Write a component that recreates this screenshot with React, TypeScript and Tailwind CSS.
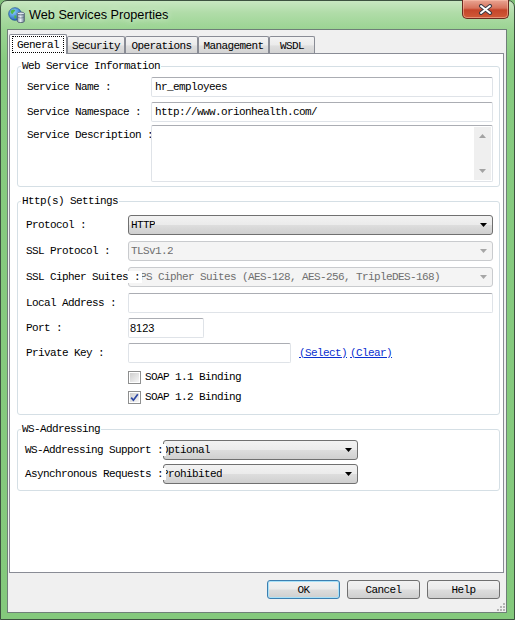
import React from "react";

const btnBg =
  "bg-[linear-gradient(180deg,#f2f2f2_0%,#ebebeb_48%,#dddddd_52%,#cfcfcf_100%)]";

function Arrow({ color }: { color: string }) {
  return (
    <svg width="7" height="4" viewBox="0 0 7 4" className="shrink-0">
      <path d="M0 0H7L3.5 4Z" fill={color} />
    </svg>
  );
}

const Label = ({ w, text, cover = "" }: { w: string; text: string; cover?: string }) => (
  <div className={`${w} shrink-0 relative z-10 whitespace-nowrap`}>
    <span className={cover}>{text}</span>
  </div>
);

const TextBox = ({ w, value = "", font = "" }: { w: string; value?: string; font?: string }) => (
  <div
    className={`${w} h-[20px] rounded-[2px] border border-[#dfe3e8] border-t-[#abadb3] bg-white flex items-center overflow-hidden whitespace-nowrap ${font}`}
  >
    {value}
  </div>
);

function Combo({
  value,
  w,
  disabled = false,
  textClass = "pl-[2px]",
}: {
  value: string;
  w: string;
  disabled?: boolean;
  textClass?: string;
}) {
  return (
    <div
      className={`${w} h-[20px] flex items-center justify-between rounded-[3px] border pr-[5px] overflow-hidden whitespace-nowrap ${
        disabled ? "border-[#c9cbce] bg-[#f4f4f4] text-[#6f6f6f]" : `border-[#707070] ${btnBg}`
      }`}
    >
      <span className={`min-w-0 overflow-hidden ${textClass}`}>{value}</span>
      <Arrow color={disabled ? "#a6a6a6" : "#000000"} />
    </div>
  );
}

function Check({ checked }: { checked?: boolean }) {
  return (
    <div className="w-[13px] h-[13px] shrink-0 border border-[#8e8f8f] bg-white p-[1px]">
      <div className="w-full h-full flex items-center justify-center bg-[linear-gradient(135deg,#cfcfcf,#f6f6f6)]">
        {checked && (
          <svg width="9" height="9" viewBox="0 0 9 9">
            <path d="M1.2 4.6L3.4 7.2L7.8 1.2" fill="none" stroke="#2b46a3" strokeWidth="1.7" />
          </svg>
        )}
      </div>
    </div>
  );
}

function Group({ title, inner, mt, children }: { title: string; inner: string; mt: string; children: React.ReactNode }) {
  return (
    <fieldset className={`${mt} ml-[7px] w-[483px] rounded-[3px] border border-[#d5dfe5]`}>
      <legend className="ml-[3px] px-[1px] leading-[12px]">{title}</legend>
      <div className={inner}>{children}</div>
    </fieldset>
  );
}

function Tab({ text, w, active }: { text: string; w: string; active?: boolean }) {
  if (active)
    return (
      <div className={`${w} h-[20px] -mb-[1px] relative z-10 rounded-t-[2px] border border-b-0 border-[#898c95] bg-white px-[2px] py-[1px]`}>
        <div className="h-full w-full border border-dotted border-black flex items-center justify-center">{text}</div>
      </div>
    );
  return (
    <div
      className={`${w} h-[17px] rounded-t-[2px] border border-b-0 border-[#898c95] bg-[linear-gradient(180deg,#f3f3f3_0%,#ebebeb_50%,#dfdfdf_55%,#d3d3d3_100%)] flex items-center justify-center pt-[2px]`}
    >
      {text}
    </div>
  );
}

function Button({ text, def }: { text: string; def?: boolean }) {
  return (
    <div
      className={`w-[73px] h-[19px] rounded-[3px] border flex items-center justify-center ${
        def ? "border-[#3c7fb1] shadow-[inset_0_0_0_1px_#a8e1f8]" : "border-[#707070]"
      } ${btnBg}`}
    >
      {text}
    </div>
  );
}

function TitleIcon() {
  return (
    <svg width="17" height="16" viewBox="0 0 17 16" className="shrink-0">
      <defs>
        <radialGradient id="gl" cx="0.35" cy="0.3" r="0.8">
          <stop offset="0" stopColor="#8fd0ff" />
          <stop offset="1" stopColor="#1b5fb8" />
        </radialGradient>
        <linearGradient id="cy" x1="0" x2="1">
          <stop offset="0" stopColor="#8a9db3" />
          <stop offset="0.45" stopColor="#e8eef5" />
          <stop offset="1" stopColor="#6f8296" />
        </linearGradient>
      </defs>
      <circle cx="7" cy="7" r="6.3" fill="url(#gl)" stroke="#174a8c" strokeWidth="0.7" />
      <path d="M2.6 4.2C3.8 2.4 6 2.2 7.3 3.2C6.8 4.8 5.2 5.2 4.7 6.9C3.6 7 2.3 5.9 2.6 4.2Z" fill="#4fb648" />
      <path d="M6.5 8.2C8 7.8 8.8 9.2 8.3 11.2C7.3 12 6.2 11.3 6.3 10Z" fill="#4fb648" />
      <path d="M9.3 6.5V14.2A3.5 1.4 0 0 0 16.3 14.2V6.5Z" fill="url(#cy)" stroke="#45566a" strokeWidth="0.8" />
      <ellipse cx="12.8" cy="6.5" rx="3.5" ry="1.4" fill="#dfe8f2" stroke="#45566a" strokeWidth="0.8" />
      <path d="M9.3 9.6A3.5 1.4 0 0 0 16.3 9.6" fill="none" stroke="#56687c" strokeWidth="0.6" />
    </svg>
  );
}

export default function App() {
  return (
    <div className="w-[515px] h-[620px] overflow-hidden bg-[#7fbf78] font-['Liberation_Mono',monospace] text-[11px] tracking-[-0.6px] leading-[12px] text-black">
      <div className="relative h-full rounded-t-[7px] border border-[#3d5240] bg-[linear-gradient(180deg,#c8e7c1_0px,#b0dca8_12px,#9bd493_28px,#87cb80_60px,#84c97c_100%)] flex flex-col">
        {/* title bar */}
        <div className="h-[28px] flex items-center pl-[7px]">
          <TitleIcon />
          <span className="ml-[4px] font-['Liberation_Sans',sans-serif] text-[12.7px] tracking-normal [text-shadow:0_0_6px_#e8f6e6]">
            Web Services Properties
          </span>
          <div className="ml-auto self-start -mt-[1px] mr-[5px] w-[47px] h-[19px] rounded-b-[5px] border border-[#6a2a1f] border-t-0 bg-[linear-gradient(180deg,#e9a593_0%,#d7735c_45%,#c5452a_55%,#d05a37_100%)] shadow-[inset_0_0_0_1px_rgba(255,200,180,0.5)] flex items-center justify-center">
            <svg width="15" height="11" viewBox="0 0 15 11">
              <path d="M3 2L12 9M12 2L3 9" stroke="#3a3a44" strokeWidth="4" strokeLinecap="round" />
              <path d="M3 2L12 9M12 2L3 9" stroke="#ffffff" strokeWidth="2" strokeLinecap="round" />
            </svg>
          </div>
        </div>

        {/* client area */}
        <div className="relative ml-[6px] w-[500px] h-[584px] border border-[#6f7f78] bg-[#f0f0f0] pt-[4px] flex flex-col">
          <div className="ml-[1px] h-[19px] flex items-end">
            <Tab text="General" w="w-[58px]" active />
            <Tab text="Security" w="w-[58px]" />
            <Tab text="Operations" w="w-[73px]" />
            <Tab text="Management" w="w-[71px]" />
            <Tab text="WSDL" w="w-[46px]" />
          </div>

          <div className="ml-[1px] w-[495px] h-[520px] border border-[#898c95] bg-white">
            <Group title="Web Service Information" mt="mt-[6px]" inner="flex flex-col pl-[9px] pr-[6px] pt-[5px] pb-[4px]">
              <div className="h-[20px] flex items-center">
                <Label w="w-[124px]" text="Service Name :" />
                <TextBox w="flex-1" value="hr_employees" font="pl-[3px]" />
              </div>
              <div className="mt-[5px] h-[20px] flex items-center">
                <Label w="w-[124px]" text="Service Namespace :" />
                <TextBox w="flex-1" value="http://www.orionhealth.com/" font="pl-[3px]" />
              </div>
              <div className="mt-[3px] flex items-start">
                <div className="w-[124px] shrink-0 whitespace-nowrap pt-[4px]">Service Description :</div>
                <div className="flex-1 h-[57px] rounded-[2px] border border-[#dfe3e8] border-t-[#abadb3] bg-white flex justify-end p-[1px]">
                  <div className="w-[17px] h-full bg-[#efefef] flex flex-col items-center justify-between py-[7px]">
                    <svg width="7" height="4" viewBox="0 0 7 4">
                      <path d="M0 4H7L3.5 0Z" fill="#a3a3a3" />
                    </svg>
                    <svg width="7" height="4" viewBox="0 0 7 4">
                      <path d="M0 0H7L3.5 4Z" fill="#a3a3a3" />
                    </svg>
                  </div>
                </div>
              </div>
            </Group>

            <Group title="Http(s) Settings" mt="mt-[8px]" inner="flex flex-col pl-[8px] pr-[6px] pt-[8px] pb-[7px]">
              <div className="h-[20px] flex items-center">
                <Label w="w-[102px]" text="Protocol :" />
                <Combo w="flex-1" value="HTTP" />
              </div>
              <div className="mt-[6px] h-[20px] flex items-center">
                <Label w="w-[102px]" text="SSL Protocol :" />
                <Combo w="flex-1" value="TLSv1.2" disabled />
              </div>
              <div className="mt-[6px] h-[20px] flex items-center">
                <Label w="w-[102px]" text="SSL Cipher Suites :" cover="bg-white pr-[2px]" />
                <Combo
                  w="flex-1"
                  value="TPS Cipher Suites (AES-128, AES-256, TripleDES-168)"
                  disabled
                  textClass="pl-[5px]"
                />
              </div>
              <div className="mt-[6px] h-[20px] flex items-center">
                <Label w="w-[102px]" text="Local Address :" />
                <TextBox w="flex-1" />
              </div>
              <div className="mt-[5px] h-[20px] flex items-center">
                <Label w="w-[102px]" text="Port :" />
                <TextBox
                  w="w-[76px]"
                  value="8123"
                  font="pl-[1px] font-['Liberation_Sans',sans-serif] text-[11px] tracking-normal"
                />
              </div>
              <div className="mt-[5px] h-[20px] flex items-center">
                <Label w="w-[102px]" text="Private Key :" />
                <TextBox w="w-[163px]" />
                <div className="ml-[8px] flex gap-[3px] text-[#0b2fd0] underline">
                  <span>(Select)</span>
                  <span>(Clear)</span>
                </div>
              </div>
              <div className="mt-[4px] h-[20px] flex items-center pl-[102px]">
                <Check />
                <span className="ml-[4px]">SOAP 1.1 Binding</span>
              </div>
              <div className="h-[20px] flex items-center pl-[102px]">
                <Check checked />
                <span className="ml-[4px]">SOAP 1.2 Binding</span>
              </div>
            </Group>

            <Group title="WS-Addressing" mt="mt-[8px]" inner="flex flex-col pl-[7px] pt-[5px] pb-[6px]">
              <div className="h-[20px] flex items-center">
                <Label w="w-[138px]" text="WS-Addressing Support :" cover="bg-white pr-[3px]" />
                <Combo w="w-[195px]" value="Optional" textClass="-ml-[2px]" />
              </div>
              <div className="mt-[4px] h-[20px] flex items-center">
                <Label w="w-[138px]" text="Asynchronous Requests :" cover="bg-white pr-[3px]" />
                <Combo w="w-[195px]" value="Prohibited" textClass="-ml-[2px]" />
              </div>
            </Group>
          </div>

          <div className="mt-[7px] flex justify-end gap-[7px] pr-[6px]">
            <Button text="OK" def />
            <Button text="Cancel" />
            <Button text="Help" />
          </div>

          <svg width="8" height="8" viewBox="0 0 8 8" className="absolute right-[1px] bottom-[1px]">
            <g fill="#b4b4b4">
              <rect x="6" y="0" width="2" height="2" />
              <rect x="3" y="3" width="2" height="2" />
              <rect x="6" y="3" width="2" height="2" />
              <rect x="0" y="6" width="2" height="2" />
              <rect x="3" y="6" width="2" height="2" />
              <rect x="6" y="6" width="2" height="2" />
            </g>
          </svg>
        </div>
      </div>
    </div>
  );
}
